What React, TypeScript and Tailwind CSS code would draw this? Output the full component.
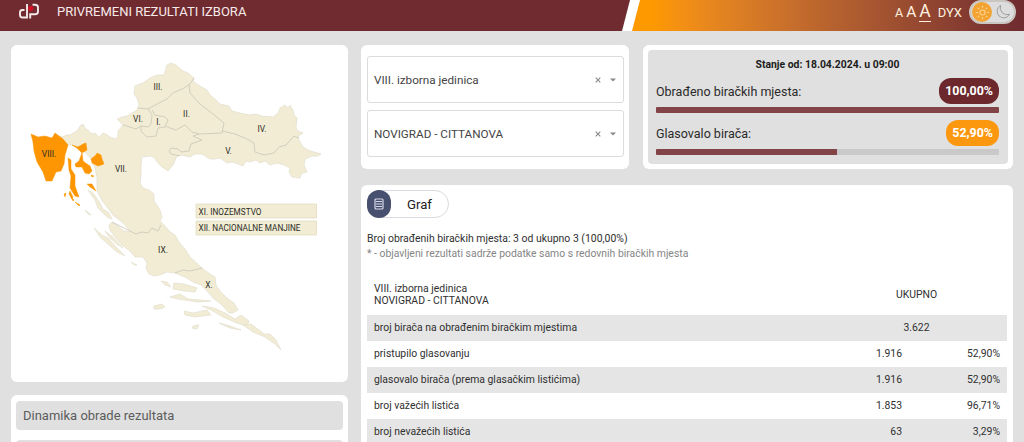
import React from "react";
import { Sun } from "lucide-react";

type Row = { label: string; total?: string; value?: string; percent?: string };

const rows: Row[] = [
  { label: "broj birača na obrađenim biračkim mjestima", total: "3.622" },
  { label: "pristupilo glasovanju", value: "1.916", percent: "52,90%" },
  { label: "glasovalo birača (prema glasačkim listićima)", value: "1.916", percent: "52,90%" },
  { label: "broj važećih listića", value: "1.853", percent: "96,71%" },
  { label: "broj nevažećih listića", value: "63", percent: "3,29%" },
];

const mainland =
  "M55 134L59 136L63 137L66 135L70 135L75 132L78 130L80 126L83 124L85 128L89 131L92 134L95 133L99 137L103 133L106 134L110 137L115 139L118 137L118 131L123 125L117 119L122 117L127 116L132 113L137 110L139 105L137 98L134 94L135 86L143 83L150 78L157 75L164 75L167 65L171 63L176 65L183 71L188 73L194 78L193 81L200 86L207 90L210 95L216 100L220 104L229 106L232 111L240 113L250 115L256 114L262 116L273 117L278 113L280 108L285 105L288 108L290 105L293 110L294 115L297 118L296 128L298 131L303 133L298 136L299 140L303 147L308 150L314 152L321 154L318 156L312 156L305 159L304 165L307 172L302 173L300 178L292 177L289 172L290 168L284 165L277 163L270 165L265 161L260 163L256 160L250 162L246 161L243 166L238 164L232 162L227 163L220 158L215 159L210 159L202 154L195 154L190 157L182 155L177 156L173 165L168 171L162 167L158 163L154 157L150 156L142 157L141 165L141 175L140 183L143 188L149 190L154 194L154 201L160 210L162 217L160 221L165 226L169 231L175 235L179 242L185 249L190 257L202 268L207 272L215 277L216 285L220 291L227 298L234 303L238 310L233 313L229 313L222 305L213 298L207 291L201 285L193 282L185 277L175 273L167 272L160 275L154 276L149 274L146 268L147 263L143 257L135 257L130 251L122 245L115 237L110 230L109 225L112 222L118 226L124 231L131 232L123 223L113 215L108 208L103 202L97 191L97 178L95 168L92 160L85 152L79 150L73 145L67 145Z";

const borders = [
  "M138 108L148 109L157 104L167 99L173 93L184 88L190 84L194 78",
  "M189 84L190 93L200 104L213 114L224 123L222 133L199 134L192 132L185 125L176 130L170 128L165 126",
  "M148 109L152 115L151 124L148 127L141 126L136 129L130 127L123 125",
  "M152 110L155 115L165 117L168 120L165 127L158 128L156 136L147 137L141 131L141 126",
  "M222 131L235 134L247 139L254 143L255 152L264 155L274 153L279 147L286 145L294 136L299 138",
  "M199 134L193 136L202 140L191 144L189 151L181 152L178 149L171 148L169 151L171 154L180 156",
  "M112 222L120 226L130 231L136 234L142 232L148 233L152 228L158 231L161 225",
  "M175 273L183 270L190 271L202 268",
];

const litoral = [
  "M31 134L38 137L45 136L52 138L55 133L59 136L63 139L68 145L65 155L64 164L61 171L56 172L52 181L46 181L43 172L37 162L34 151L33 142Z",
  "M72 145L78 147L83 144L86 143L87 150L82 153L77 148Z",
  "M91 159L96 155L97 153L101 155L102 159L104 164L98 166L92 163Z",
  "M82 153L83 161L87 164L90 166L92 171L89 174L85 173L82 167L76 167L75 164L79 161Z",
  "M68 158L71 160L71 169L75 175L75 186L79 197L75 196L70 188L71 176L69 170Z",
  "M87 184L92 184L96 191L90 187Z",
  "M70 191L73 197L72 199L69 194Z",
  "M64 194L66 193L65 197Z",
  "M75 202L80 205L79 206Z",
  "M71 197L74 200L73 201Z",
  "M91 175L94 176L92 177Z",
];

const islands = [
  "M88 190L93 193L100 203L103 209L109 213L112 219L107 217L102 212L98 208L95 200Z",
  "M94 228L102 235L108 238L117 248L125 256L117 252L108 244L100 237Z",
  "M105 231L113 237L123 248L118 245L110 238Z",
  "M161 281L167 282L171 287L165 285Z",
  "M174 283L184 284L197 288L195 292L185 291L173 289Z",
  "M170 297L180 294L188 299L211 301L198 302L178 299Z",
  "M154 306L162 304L165 307L160 309L154 309Z",
  "M184 311L193 313L207 310L211 315L195 317L185 315Z",
  "M202 306L214 308L225 313L235 319L241 315L249 321L247 326L237 323L223 317L211 310Z",
  "M219 323L230 326L241 330L230 328Z",
  "M193 326L199 325L197 329L192 328Z",
  "M243 325L251 324L259 330L264 334L270 334L276 340L281 350L275 344L265 337L253 332Z",
  "M85 210L88 212L91 215L88 214Z",
  "M131 262L137 265L134 265Z",
];

const labels: [string, number, number][] = [
  ["I.", 158.5, 125],
  ["II.", 186.5, 116.5],
  ["III.", 158, 90],
  ["IV.", 262, 131.5],
  ["V.", 228.5, 153.5],
  ["VI.", 138, 122],
  ["VII.", 121, 172],
  ["VIII.", 49, 157],
  ["IX.", 163, 253],
  ["X.", 209, 288],
];

function Logo() {
  return (
    <svg className="h-5 w-6" viewBox="0 0 24 20" fill="none">
      <path d="M10 4V17.500H5.500Q3 17.500 3 15V12.500Q3 10 5.500 10H7.500" stroke="#f4e8e8" strokeWidth="1.9" />
      <path d="M13.200 18.500V14.300H18Q21 14.300 21 11.500V7.500Q21 4.800 18 4.800H15.500" stroke="#f4e8e8" strokeWidth="1.9" />
      <circle cx="13.800" cy="8.500" r="2.700" fill="#cf1126" />
    </svg>
  );
}

function Header() {
  return (
    <header className="flex h-[31px] shrink-0 gap-[2px] bg-white text-white">
      <div className="flex w-[630px] items-start bg-[#6f2b2f] pl-[17px] [clip-path:polygon(0_0,100%_0,622px_100%,0_100%)]">
        <Logo />
        <h1 className="ml-4 mt-[2px] text-[13px] leading-5 text-[#f7eaea]">PRIVREMENI REZULTATI IZBORA</h1>
      </div>
      <div className="flex flex-1 items-start justify-end bg-linear-to-r from-[#ff9900] from-[5%] to-[#6f2b2f] pr-2 [clip-path:polygon(8px_0,100%_0,100%_100%,0_100%)]">
        <div className="flex h-6 items-baseline text-[#fff0df]">
          <span className="text-[12.5px] leading-6">A</span>
          <span className="ml-[3px] text-[15.5px] leading-6">A</span>
          <span className="ml-[3px] border-b border-current text-[17.5px] leading-[19px]">A</span>
          <span className="ml-[7px] text-[13px] leading-6">DYX</span>
        </div>
        <div className="ml-[7px] flex h-6 w-[47px] items-center justify-between rounded-full border-2 border-[#c9c5c1] bg-[#dddddd] pl-px pr-[3px]">
          <span className="flex size-5 items-center justify-center rounded-full bg-[#f2a331] text-[#ffd28b]">
            <Sun size={15} strokeWidth={1.8} />
          </span>
          <svg className="size-4" viewBox="0 0 24 24" fill="none" stroke="#999999" strokeWidth="1.4" strokeLinejoin="round">
            <path d="M22 15.500A10 10 0 1 1 8.500 2A10.500 10.500 0 0 0 22 15.500Z" />
          </svg>
        </div>
      </div>
    </header>
  );
}

function DistrictMap() {
  return (
    <section className="h-[337px] shrink-0 rounded-md bg-white">
      <svg className="block h-[337px] w-[337px]" viewBox="11 45 337 337" strokeLinejoin="round">
        <g fill="#f1ecd3" stroke="#e4e1d2" strokeWidth="0.8">
          <path d={mainland} />
          {islands.map((d) => (
            <path key={d} d={d} />
          ))}
        </g>
        <g fill="none" stroke="#cfcbbb" strokeWidth="0.9">
          {borders.map((d) => (
            <path key={d} d={d} />
          ))}
        </g>
        <g fill="#fd9602" stroke="#fd9602" strokeWidth="0.5">
          {litoral.map((d) => (
            <path key={d} d={d} />
          ))}
        </g>
        <g fill="#f1ecd3" stroke="#e3ddc0" strokeWidth="0.8">
          <rect x="196" y="204" width="120.5" height="14" />
          <rect x="196" y="221" width="120.5" height="14" />
        </g>
        <g fill="#2c2c28" fontSize="8.4" textAnchor="middle">
          {labels.map(([name, x, y]) => (
            <text key={name} x={x} y={y}>
              {name}
            </text>
          ))}
        </g>
        <g fill="#2c2c28" fontSize="8.2">
          <text x="198.500" y="214.500" textLength="63">XI. INOZEMSTVO</text>
          <text x="198.500" y="231" textLength="102">XII. NACIONALNE MANJINE</text>
        </g>
      </svg>
    </section>
  );
}

function SelectBox({ value }: { value: string }) {
  return (
    <div className="flex h-[47px] items-center rounded-[3px] border border-[#dcdcdc] px-[7px] pl-[6px] text-[11.7px] text-[#444444]">
      <span className="flex-1 pt-[2px]">{value}</span>
      <svg className="h-[6px] w-[6px]" viewBox="0 0 6 6" stroke="#888888" strokeWidth="1.1">
        <path d="M.7 .7L5.300 5.300M5.300 .7L.7 5.300" />
      </svg>
      <svg className="ml-[9px] h-[4px] w-[6px]" viewBox="0 0 6 4" fill="#888888">
        <path d="M0 .5H6L3 3.500Z" />
      </svg>
    </div>
  );
}

function Progress({ label, value, percent, badge }: { label: string; value: string; percent: number; badge: string }) {
  return (
    <div className="h-[42px]">
      <div className="flex h-[26px] items-center justify-between">
        <span className="pt-[2px] text-[12.5px] text-[#2a2a2a]">{label}</span>
        <span className={`flex h-[26px] items-center rounded-[12px] px-[6px] text-[12.4px] font-bold text-white ${badge}`}>{value}</span>
      </div>
      <div className="mt-[3px] h-[6px] overflow-hidden rounded-[1px] bg-[#c9c9c9]">
        <div className="h-full bg-[#824447]" style={{ width: `${percent}%` }} />
      </div>
    </div>
  );
}

function Results() {
  return (
    <section className="flex h-[270px] flex-col rounded-t-md bg-white px-[6px] pt-[5px] text-[10.4px] text-[#303030]">
      <div className="flex h-7 w-[82px] shrink-0 items-center rounded-full border border-[#dadae0]">
        <span className="-ml-px flex h-7 w-6 items-center justify-center rounded-[12px] bg-[#48506f]">
          <svg className="h-3 w-[10px]" viewBox="0 0 10 12" fill="none" stroke="#d7daea">
            <rect x="1" y="1" width="8" height="10" rx="1" strokeWidth="1.2" />
            <path d="M2 3.500H8M2 6H8M2 8.500H8" />
          </svg>
        </span>
        <span className="ml-4 pt-px text-[13.2px] text-[#222222]">Graf</span>
      </div>
      <p className="mt-[13px] text-[10.45px] leading-[15px]">Broj obrađenih biračkih mjesta: 3 od ukupno 3 (100,00%)</p>
      <p className="text-[10.4px] leading-[15px] text-[#858585]">* - objavljeni rezultati sadrže podatke samo s redovnih biračkih mjesta</p>
      <div className="mt-[15px] flex h-[39px] shrink-0 items-center pb-px pl-[7px] leading-3">
        <div className="flex-1">
          VIII. izborna jedinica
          <br />
          NOVIGRAD - CITTANOVA
        </div>
        <div className="w-[181px] text-center">UKUPNO</div>
      </div>
      <div className="flex flex-col">
        {rows.map((row) => (
          <div key={row.label} className="flex h-[26px] shrink-0 items-center pl-[7px] pr-[7px] odd:bg-[#e5e5e5]">
            <span className="flex-1">{row.label}</span>
            {row.total ? (
              <span className="w-[174px] pl-[7px] text-center">{row.total}</span>
            ) : (
              <>
                <span className="text-right">{row.value}</span>
                <span className="w-[98px] text-right">{row.percent}</span>
              </>
            )}
          </div>
        ))}
      </div>
    </section>
  );
}

export default function App() {
  return (
    <div className="flex h-[442px] w-[1024px] flex-col overflow-hidden bg-[#e0e0e0] font-[Roboto,sans-serif]">
      <Header />
      <main className="flex min-h-0 flex-1 gap-[13px] pl-[11px] pr-[11px] pt-[14px]">
        <div className="flex w-[337px] shrink-0 flex-col gap-[13px]">
          <DistrictMap />
          <section className="flex h-[80px] shrink-0 flex-col gap-[10px] rounded-t-md bg-white p-[5px] pt-[6px]">
            <div className="flex h-[29px] items-center rounded-[4px] bg-[#e0e0e0] pl-[7px] text-[13px] text-[#5c5c5c]">
              Dinamika obrade rezultata
            </div>
            <div className="h-[29px] rounded-[4px] bg-[#e0e0e0]" />
          </section>
        </div>
        <div className="flex w-[652px] shrink-0 flex-col gap-4">
          <div className="flex h-[124px] shrink-0 gap-[14px]">
            <section className="flex w-[268px] flex-col gap-[7px] rounded-md bg-white pl-[6px] pr-[5px] pt-[11px]">
              <SelectBox value="VIII. izborna jedinica" />
              <SelectBox value="NOVIGRAD - CITTANOVA" />
            </section>
            <section className="w-[370px] rounded-md bg-white p-[5px]">
              <div className="h-[114px] rounded-[4px] bg-[#e0e0e0] pl-2 pr-[9px]">
                <p className="flex h-7 items-center justify-center pt-px text-[10.4px] font-bold text-[#1c1c1c]">
                  Stanje od: 18.04.2024. u 09:00
                </p>
                <Progress label="Obrađeno biračkih mjesta:" value="100,00%" percent={100} badge="bg-[#6c282c]" />
                <Progress label="Glasovalo birača:" value="52,90%" percent={52.9} badge="bg-[#fc9810]" />
              </div>
            </section>
          </div>
          <Results />
        </div>
      </main>
    </div>
  );
}
